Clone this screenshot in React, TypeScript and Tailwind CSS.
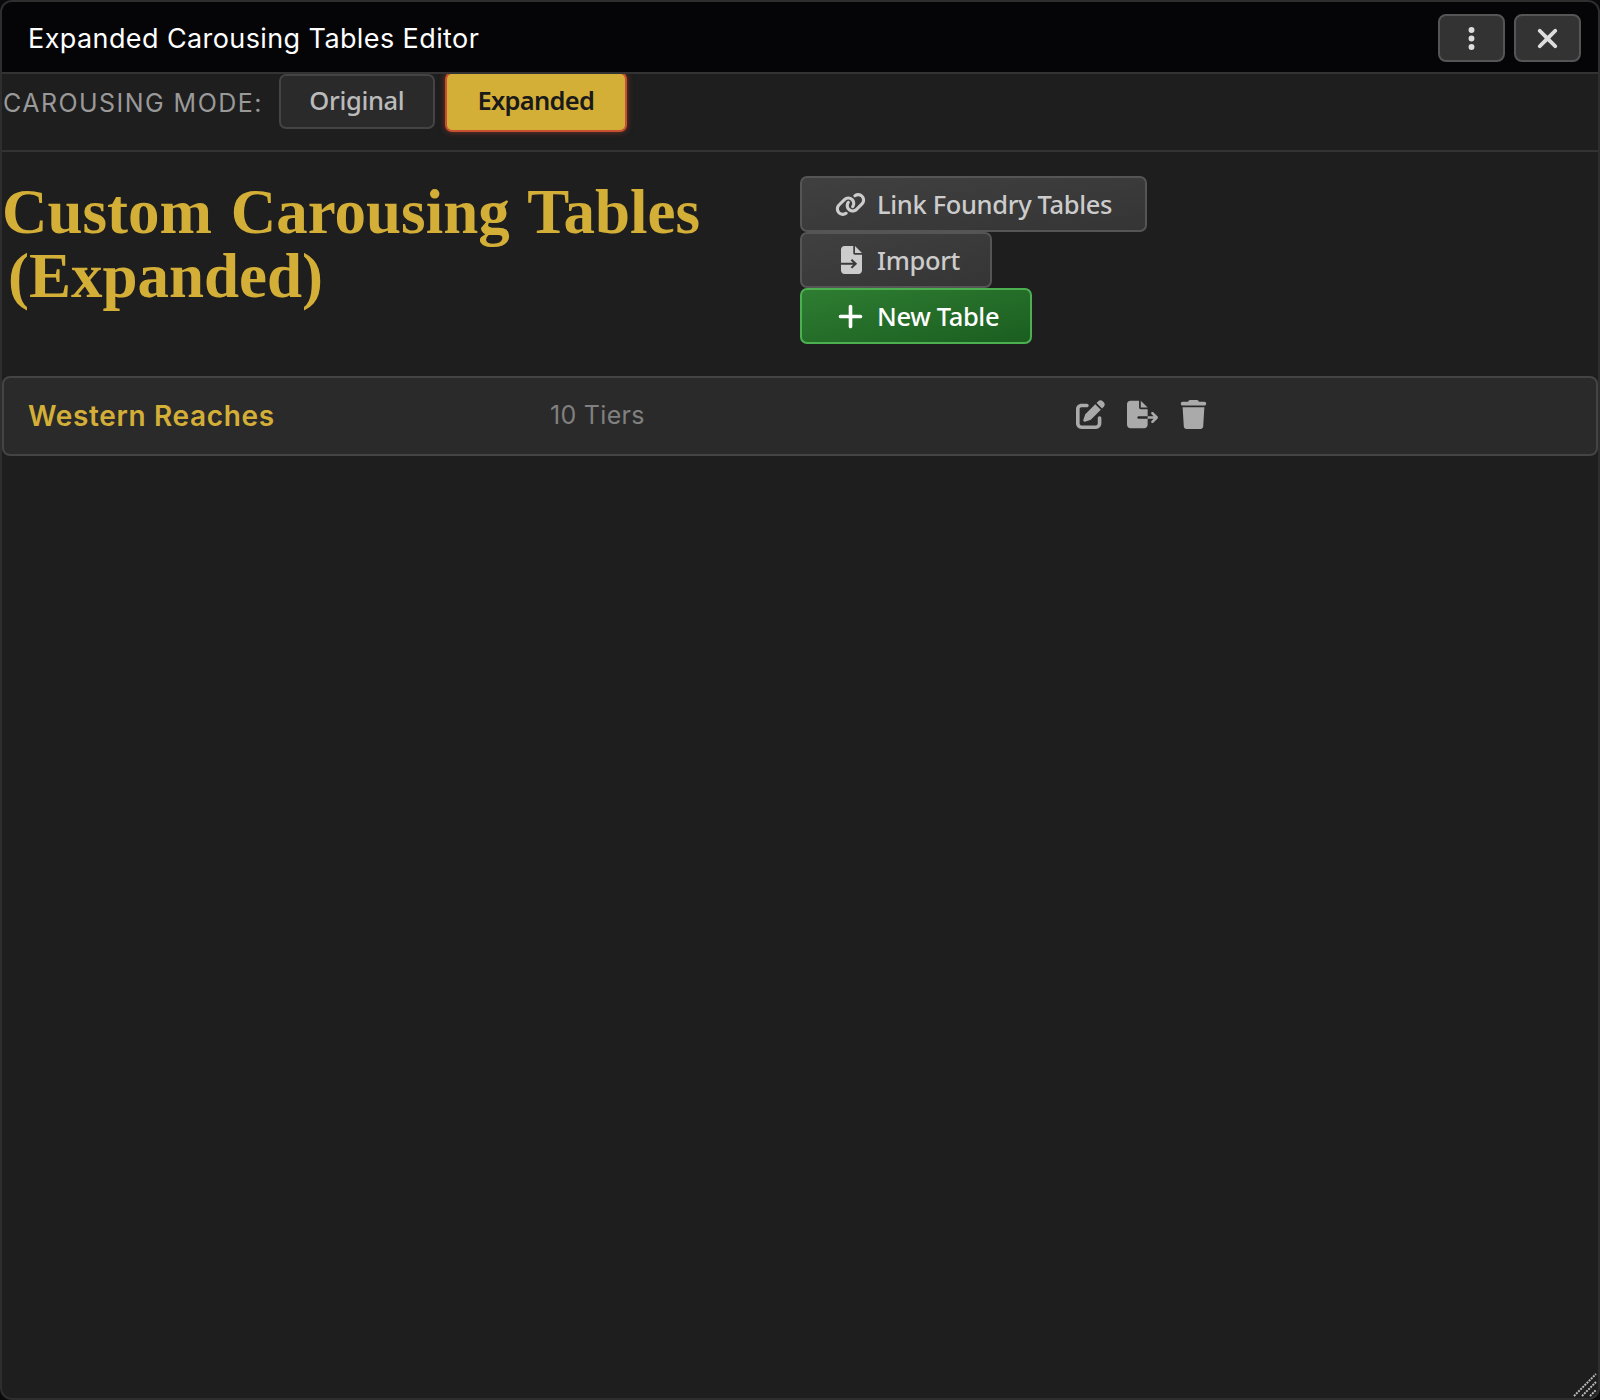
import { FaEllipsisVertical, FaXmark, FaLink, FaPlus, FaFileExport, FaTrash, FaPenToSquare } from "react-icons/fa6";

const btn = "flex items-center rounded-[7px] border-2 text-[25.5px] tracking-[-0.35px] font-medium font-['Noto_Sans',sans-serif]";
const action = "h-[56px] pl-[32px]";

export default function App() {
  return (
    <div className="w-[1600px] h-[1400px] bg-[#0a0a0a]">
      <div className="relative flex flex-col w-full h-full rounded-[12px] border-2 border-[#2e2e2e] bg-[#1e1e1e] overflow-hidden">
        <header className="flex items-center justify-between h-[72px] shrink-0 pt-[2px] pl-[26px] pr-[17px] bg-[#050507] border-b-2 border-[#333333]">
          <h1 className="mt-[2px] text-white text-[27px] font-['Inter',sans-serif] font-normal tracking-[0.4px]">Expanded Carousing Tables Editor</h1>
          <div className="flex gap-[9px]">
            <button className="flex items-center justify-center w-[67px] h-[48px] rounded-[8px] border-2 border-[#555555] bg-[#333333] text-[#dddddd] text-[27px]"><FaEllipsisVertical /></button>
            <button className="flex items-center justify-center w-[67px] h-[48px] rounded-[8px] border-2 border-[#555555] bg-[#333333] text-[#dddddd] text-[31px]"><FaXmark /></button>
          </div>
        </header>

        <section className="flex items-start gap-[10px] h-[78px] shrink-0 border-b-2 border-[#333333] overflow-hidden">
          <span className="mt-[13px] mr-[6px] pl-px text-[25px] leading-[32px] tracking-[1.45px] text-[#999999] font-['Inter',sans-serif]">CAROUSING MODE:</span>
          <button className={`${btn} h-[55px] pb-[3px] w-[156px] justify-center border-[#444444] bg-[#2a2a2a] text-[#bbbbbb]`}>Original</button>
          <button className={`${btn} h-[60px] -mt-[2px] pb-[4px] w-[182px] justify-center border-[#c8502f] bg-[#d4af37] text-[#1a1a1a] !font-semibold !tracking-[-0.7px] shadow-[0_0_6px_rgba(200,80,47,0.5)]`}>Expanded</button>
        </section>

        <section className="flex items-start pt-[24px] shrink-0">
          <h2 className="w-[798px] shrink-0 text-[#d4af37] text-[63px] leading-[64px] font-bold font-['Liberation_Serif',serif] pt-[4px] [word-spacing:3px]">Custom Carousing Tables <span className="inline-block ml-[6px]">(Expanded)</span></h2>
          <div className="flex flex-col items-start">
            <button className={`${btn} ${action} w-[347px] border-[#555555] bg-gradient-to-br from-[#404040] to-[#353535] text-[#cccccc]`}>
              <span className="flex w-[43px] pl-px shrink-0"><FaLink className="text-[31px]" /></span>Link Foundry Tables
            </button>
            <button className={`${btn} ${action} w-[192px] border-[#555555] bg-gradient-to-br from-[#404040] to-[#353535] text-[#cccccc]`}>
              <span className="flex w-[43px] pl-[7px] shrink-0">
                <svg width="21" height="28" viewBox="0 0 384 512" fill="currentColor">
                  <path d="M64 0C28.7 0 0 28.7 0 64V448c0 35.3 28.7 64 64 64H320c35.3 0 64-28.7 64-64V160H256c-17.7 0-32-14.3-32-32V0H64zM256 0V128H384L256 0z" />
                  <path d="M0 325H265M190 250L268 325L190 400" fill="none" stroke="#3a3a3a" strokeWidth="38" />
                </svg>
              </span>Import
            </button>
            <button className={`${btn} ${action} w-[232px] border-[#4caf50] bg-gradient-to-br from-[#2e7d32] to-[#1b5e20] text-white`}>
              <span className="flex w-[43px] pl-[2px] shrink-0"><FaPlus className="text-[29px]" /></span>New Table
            </button>
          </div>
        </section>

        <section className="mt-[32px] shrink-0 flex items-center h-[80px] rounded-[8px] border-2 border-[#444444] bg-[#2a2a2a] pl-[24px]">
          <span className="w-[522px] -mt-[1px] text-[#d4af37] text-[28px] font-semibold tracking-[0.65px] font-['Inter',sans-serif]">Western Reaches</span>
          <span className="w-[526px] text-[#808080] text-[25px] tracking-[0.3px] font-['Inter',sans-serif]">10 Tiers</span>
          <div className="flex items-center gap-[22px] text-[#aaaaaa] -mt-[4px]">
            <FaPenToSquare className="text-[29px]" />
            <FaFileExport className="text-[31px]" />
            <FaTrash className="text-[29px] -ml-[1px]" />
          </div>
        </section>

        <svg className="absolute right-0 bottom-0" width="26" height="26" viewBox="0 0 26 26" stroke="#bbbbbb" strokeWidth="2" strokeDasharray="2 1">
          <path d="M2 24 L24 2 M10 24 L24 10 M18 24 L24 18" />
        </svg>
      </div>
    </div>
  );
}
